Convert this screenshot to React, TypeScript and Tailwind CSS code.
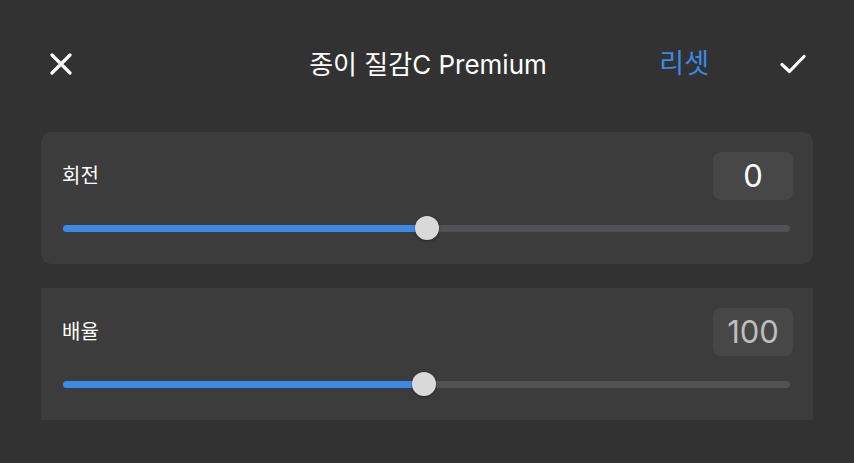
import React from "react";

const font = { fontFamily: '"Inter", "Noto Sans CJK KR", sans-serif' };

type SliderRowProps = {
  label: string;
  value: string;
  percent: number;
  muted?: boolean;
  rounded?: boolean;
};

const SliderCard = ({ label, value, percent, muted, rounded }: SliderRowProps) => {
  return (
    <div className={`w-full bg-[#3c3c3c] pt-5 pl-[21px] pr-5 pb-6 ${rounded ? "rounded-[10px]" : ""}`}>
      <div className="flex h-12 items-center justify-between">
        <span className="text-[20px] text-white">{label}</span>
        <div
          className={`flex h-12 w-20 items-center justify-center rounded-[8px] bg-[#474747] text-[31px] ${
            muted ? "text-[#bdbdbd]" : "text-white"
          }`}
        >
          {value}
        </div>
      </div>
      <div className="relative mt-4 ml-px mr-[3px] h-6">
        <div className="absolute inset-x-0 top-[8.5px] h-[7px] rounded-full bg-[#525256]" />
        <div
          className="absolute left-0 top-[8.5px] h-[7px] rounded-full bg-[#3a8ae6]"
          style={{ width: `${percent}%` }}
        />
        <div
          className="absolute top-0 h-6 w-6 -translate-x-1/2 rounded-full bg-[#d9d9d9] shadow-[0_1px_3px_rgba(0,0,0,0.35)]"
          style={{ left: `${percent}%` }}
        />
      </div>
    </div>
  );
};

const App = () => {
  return (
    <div className="flex h-[463px] w-[854px] flex-col bg-[#323232]" style={font}>
      <div className="grid h-[132px] grid-cols-[1fr_auto_1fr] items-center pl-[50px] pr-[48px] pb-[4px]">
        <div className="flex">
          <svg width="22" height="22" viewBox="0 0 22 22" fill="none">
            <path d="M2 2 L20 20 M20 2 L2 20" stroke="white" strokeWidth="3.2" strokeLinecap="round" />
          </svg>
        </div>
        <span className="text-[26px] text-white">종이 질감C Premium</span>
        <div className="flex items-center justify-end">
          <span className="mr-[71px] text-[27px] text-[#3a8ae6]">리셋</span>
          <svg width="26" height="20" viewBox="0 0 26 20" fill="none">
            <path d="M2 10.5 L9.5 17.5 L24 2.5" stroke="white" strokeWidth="3.2" strokeLinecap="round" strokeLinejoin="round" />
          </svg>
        </div>
      </div>
      <div className="flex flex-col gap-6 pl-[41px] pr-[41px]">
        <SliderCard label="회전" value="0" percent={50} rounded />
        <SliderCard label="배율" value="100" percent={49.7} muted />
      </div>
    </div>
  );
};

export default App;
